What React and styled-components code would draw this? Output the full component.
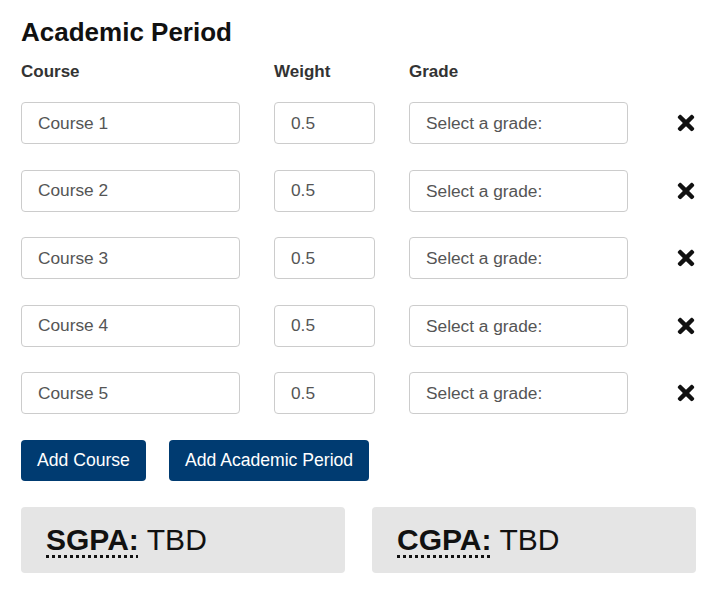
import styled, { createGlobalStyle } from "styled-components";
import { FaTimes } from "react-icons/fa";

const GlobalStyle = createGlobalStyle`
  body {
    margin: 0;
    background: #fff;
    font-family: "Liberation Sans", Arial, sans-serif;
    color: #333;
  }
`;

const courses = ["Course 1", "Course 2", "Course 3", "Course 4", "Course 5"];

export default function App() {
  return (
    <Page>
      <GlobalStyle />
      <Title>Academic Period</Title>

      <HeaderRow>
        <Label>Course</Label>
        <Label>Weight</Label>
        <Label>Grade</Label>
      </HeaderRow>

      <Rows>
        {courses.map((name) => (
          <CourseRow key={name}>
            <Field placeholder={name} />
            <Field defaultValue="0.5" />
            <GradeSelect defaultValue="">
              <option value="" disabled>
                Select a grade:
              </option>
            </GradeSelect>
            <RemoveButton aria-label="Remove course">
              <FaTimes size={24} />
            </RemoveButton>
          </CourseRow>
        ))}
      </Rows>

      <Buttons>
        <Button>Add Course</Button>
        <Button>Add Academic Period</Button>
      </Buttons>

      <Results>
        <ResultBox>
          <abbr title="Semester Grade Point Average">SGPA:</abbr> TBD
        </ResultBox>
        <ResultBox>
          <abbr title="Cumulative Grade Point Average">CGPA:</abbr> TBD
        </ResultBox>
      </Results>
    </Page>
  );
}

const Page = styled.div`
  width: 675px;
  padding: 16.5px 15px 19px 21px;
`;

const Title = styled.h1`
  margin: 0;
  font-size: 26px;
  line-height: 30px;
  font-weight: bold;
  color: #111;
`;

const HeaderRow = styled.div`
  display: grid;
  grid-template-columns: 219px 101px 219px 1fr;
  column-gap: 34px;
  margin-top: 15px;
`;

const Label = styled.div`
  font-size: 17px;
  line-height: 20px;
  font-weight: bold;
  color: #333;
`;

const Rows = styled.div`
  display: flex;
  flex-direction: column;
  gap: 25.5px;
  margin-top: 20.5px;
`;

const CourseRow = styled.div`
  display: grid;
  grid-template-columns: 219px 101px 219px 1fr;
  column-gap: 34px;
  align-items: center;
`;

const Field = styled.input`
  box-sizing: border-box;
  width: 100%;
  height: 42px;
  padding: 0 16px;
  border: 1px solid #ccc;
  border-radius: 4px;
  font-family: inherit;
  font-size: 17.3px;
  color: #555;
  background: #fff;
  outline: none;

  &::placeholder {
    color: #555;
  }
`;

const GradeSelect = styled.select`
  box-sizing: border-box;
  width: 100%;
  height: 42px;
  padding: 0 16px;
  border: 1px solid #ccc;
  border-radius: 4px;
  font-family: inherit;
  font-size: 17.3px;
  color: #555;
  background: #fff;
  appearance: none;
  outline: none;
`;

const RemoveButton = styled.button`
  justify-self: end;
  display: flex;
  align-items: center;
  padding: 0;
  margin-right: -2px;
  border: none;
  background: none;
  color: #111;
  cursor: pointer;
`;

const Buttons = styled.div`
  display: flex;
  gap: 23px;
  margin-top: 26px;
`;

const Button = styled.button`
  height: 41px;
  padding: 0 16px;
  border: none;
  border-radius: 4px;
  background: #003b71;
  color: #fff;
  font-family: inherit;
  font-size: 17.6px;
  cursor: pointer;
`;

const Results = styled.div`
  display: grid;
  grid-template-columns: 1fr 1fr;
  column-gap: 27px;
  margin-top: 26px;
`;

const ResultBox = styled.div`
  display: flex;
  align-items: center;
  gap: 8px;
  height: 66px;
  padding: 0 25px;
  border-radius: 4px;
  background: #e5e5e5;
  font-size: 30px;
  color: #111;

  abbr {
    font-weight: bold;
    text-decoration: underline dotted;
    text-underline-offset: 5px;
    cursor: help;
  }
`;
